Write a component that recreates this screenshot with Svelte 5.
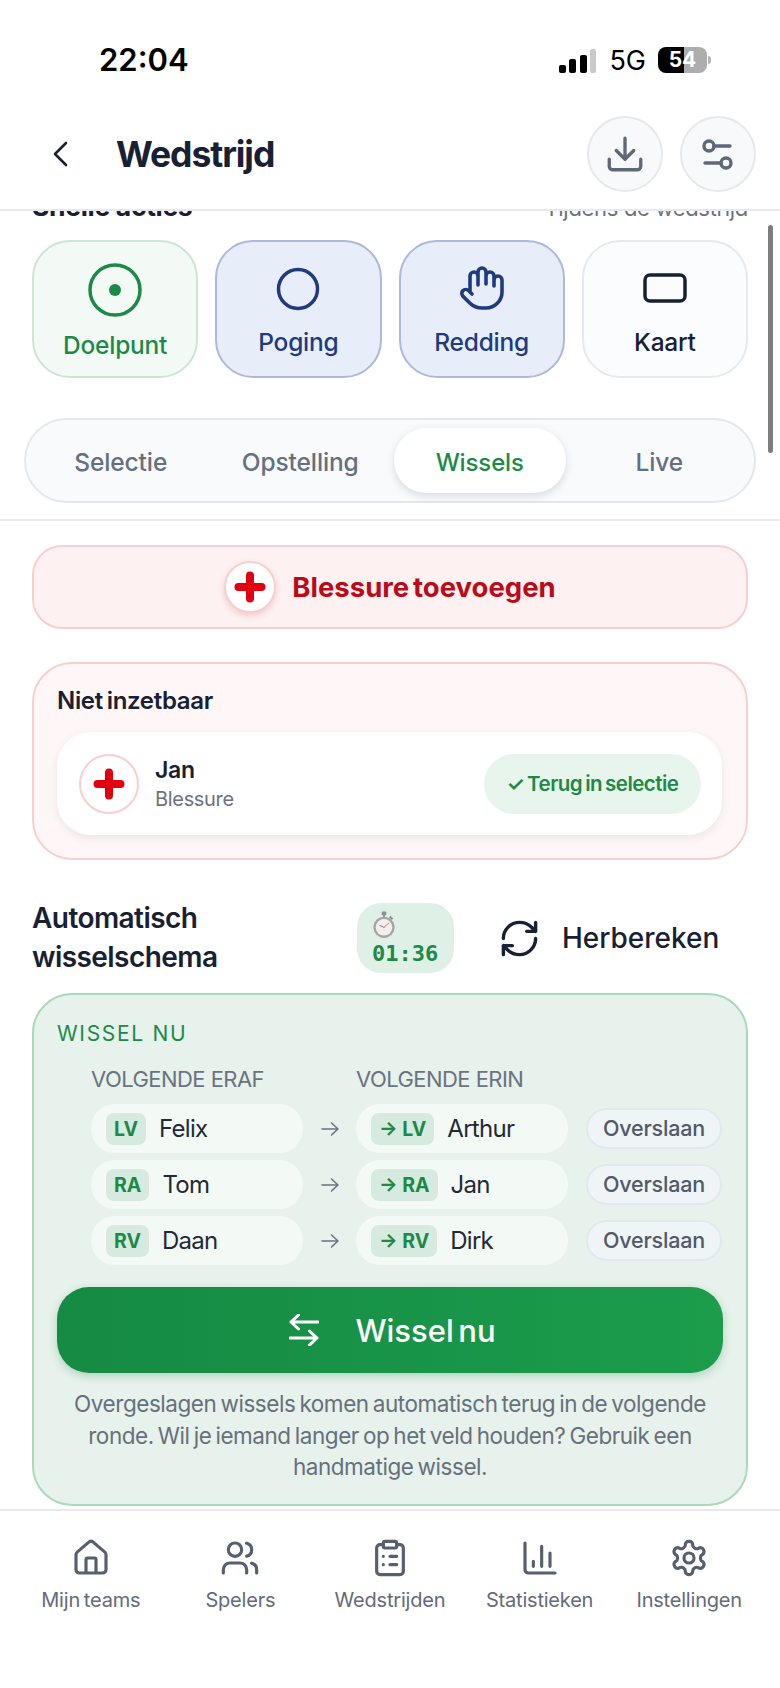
<script>
  const quick = [
    { label: 'Doelpunt', tone: 'green', icon: 'goal' },
    { label: 'Poging', tone: 'blue', icon: 'ring' },
    { label: 'Redding', tone: 'blue', icon: 'hand' },
    { label: 'Kaart', tone: 'plain', icon: 'card' }
  ];
  const tabs = ['Selectie', 'Opstelling', 'Wissels', 'Live'];
  const swaps = [
    { pos: 'LV', off: 'Felix', on: 'Arthur' },
    { pos: 'RA', off: 'Tom', on: 'Jan' },
    { pos: 'RV', off: 'Daan', on: 'Dirk' }
  ];
  const nav = [
    { label: 'Mijn teams', icon: 'home' },
    { label: 'Spelers', icon: 'users' },
    { label: 'Wedstrijden', icon: 'clip' },
    { label: 'Statistieken', icon: 'chart' },
    { label: 'Instellingen', icon: 'gear' }
  ];
</script>

{#snippet cross()}
  <svg class="cross" viewBox="0 0 32 32" aria-hidden="true">
    <path d="M16 4.5V27.500M4.500 16H27.500" />
  </svg>
{/snippet}

<div class="page">
  <div class="status">
    <span class="time">22:04</span>
    <div class="status-right">
      <div class="signal">
        <i class="b1"></i><i class="b2"></i><i class="b3"></i><i class="b4"></i>
      </div>
      <span class="net">5G</span>
      <div class="battery"><span>54</span></div>
      <i class="tip"></i>
    </div>
  </div>

  <header class="header">
    <svg class="back" viewBox="0 0 18 26" aria-hidden="true"><path d="M15 2 4 13l11 11" /></svg>
    <h1>Wedstrijd</h1>
    <div class="header-actions">
      <button class="round" aria-label="Download">
        <svg viewBox="0 0 24 24" width="42" height="42"><path d="M21 15v4a2 2 0 0 1-2 2H5a2 2 0 0 1-2-2v-4M7 10l5 5 5-5M12 15V3" /></svg>
      </button>
      <button class="round" aria-label="Filters">
        <svg viewBox="0 0 40 40" width="40" height="40"><circle cx="11" cy="12" r="5" /><path d="M16 12H32M7 29H23" /><circle cx="28" cy="29" r="5" /></svg>
      </button>
    </div>
  </header>

  <main class="main">
    <div class="scrollbar"></div>

    <div class="quick-head">
      <strong>Snelle acties</strong>
      <span>Tijdens de wedstrijd</span>
    </div>

    <div class="quick">
      {#each quick as q}
        <button class="qcard {q.tone}">
          {#if q.icon === 'goal'}
            <svg class="qi goal" viewBox="0 0 54 54"><circle cx="27" cy="27" r="25" /><circle class="dot" cx="27" cy="27" r="6" /></svg>
          {:else if q.icon === 'ring'}
            <svg class="qi" viewBox="0 0 44 44"><circle cx="22" cy="22" r="19.500" /></svg>
          {:else if q.icon === 'hand'}
            <svg class="qi hand" viewBox="0 0 24 24"><path d="M18 11V6a2 2 0 0 0-2-2 2 2 0 0 0-2 2M14 10V4a2 2 0 0 0-2-2 2 2 0 0 0-2 2v2M10 10.500V6a2 2 0 0 0-2-2 2 2 0 0 0-2 2v8M18 8a2 2 0 1 1 4 0v6a8 8 0 0 1-8 8h-2c-2.800 0-4.500-.860-5.990-2.340l-3.600-3.600a2 2 0 0 1 2.830-2.820L7 15" /></svg>
          {:else}
            <svg class="qi" viewBox="0 0 44 30"><rect x="2" y="2" width="40" height="26" rx="5" /></svg>
          {/if}
          <span>{q.label}</span>
        </button>
      {/each}
    </div>

    <div class="tabs">
      {#each tabs as t}
        <div class="tab" class:active={t === 'Wissels'}>{t}</div>
      {/each}
    </div>

    <div class="divider"></div>

    <div class="content">
      <button class="add-injury">
        <span class="add-circle">{@render cross()}</span>
        <span>Blessure toevoegen</span>
      </button>

      <section class="unavailable">
        <h2>Niet inzetbaar</h2>
        <div class="player">
          <span class="player-icon">{@render cross()}</span>
          <div class="player-text">
            <strong>Jan</strong>
            <span>Blessure</span>
          </div>
          <button class="return">✓ Terug in selectie</button>
        </div>
      </section>

      <div class="auto-head">
        <h2>Automatisch<br />wisselschema</h2>
        <div class="timer">
          <svg class="watch" viewBox="0 0 26 30" aria-hidden="true">
            <rect class="w-crown" x="10.500" y="0.500" width="5" height="4" rx="1" />
            <rect class="w-crown" x="12" y="3" width="2" height="4" />
            <path class="w-crown" d="M20 5l3 3-1.500 1.500-3-3z" />
            <circle class="w-rim" cx="13" cy="17.500" r="11.500" />
            <circle class="w-face" cx="13" cy="17.500" r="9" />
            <path class="w-hand" d="M13 17.500 18 13" />
            <path class="w-hand2" d="M13 17.500 8.500 15.500" />
          </svg>
          <span>01:36</span>
        </div>
        <button class="recalc">
          <svg viewBox="0 0 24 24" width="43" height="43"><path d="M3 12a9 9 0 0 1 9-9 9.750 9.750 0 0 1 6.740 2.740L21 8M21 3v5h-5M21 12a9 9 0 0 1-9 9 9.750 9.750 0 0 1-6.740-2.740L3 16M8 16H3v5" /></svg>
          <span>Herbereken</span>
        </button>
      </div>

      <section class="swap-card">
        <div class="eyebrow">WISSEL NU</div>
        <div class="swap-grid heads">
          <span>VOLGENDE ERAF</span>
          <span></span>
          <span>VOLGENDE ERIN</span>
        </div>
        <div class="rows">
          {#each swaps as s}
            <div class="swap-grid">
              <div class="pill">
                <b class="badge">{s.pos}</b>
                <span>{s.off}</span>
              </div>
              <svg class="arrow" viewBox="0 0 20 16" aria-hidden="true"><path d="M2 8H18M11.500 2 18 8l-6.500 6" /></svg>
              <div class="pill">
                <b class="badge">→ {s.pos}</b>
                <span>{s.on}</span>
              </div>
              <button class="skip">Overslaan</button>
            </div>
          {/each}
        </div>

        <button class="swap-now">
          <svg viewBox="0 0 30 32" width="30" height="32" aria-hidden="true"><path d="M29 8H2M9.500 1 2 8l7.500 7M1 24H28M20.500 17 28 24l-7.500 7" /></svg>
          <span>Wissel nu</span>
        </button>

        <p class="note">Overgeslagen wissels komen automatisch terug in de volgende ronde. Wil je iemand langer op het veld houden? Gebruik een handmatige wissel.</p>
      </section>
    </div>
  </main>

  <nav class="nav">
    {#each nav as n}
      <div class="nav-item">
        <svg viewBox="0 0 24 24" width="40" height="40" aria-hidden="true">
          {#if n.icon === 'home'}
            <path d="M3 10a2 2 0 0 1 .7-1.500l7-6a2 2 0 0 1 2.600 0l7 6a2 2 0 0 1 .7 1.500v9a2 2 0 0 1-2 2H5a2 2 0 0 1-2-2zM15 21v-8a1 1 0 0 0-1-1h-4a1 1 0 0 0-1 1v8" />
          {:else if n.icon === 'users'}
            <path d="M16 21v-2a4 4 0 0 0-4-4H6a4 4 0 0 0-4 4v2M22 21v-2a4 4 0 0 0-3-3.870M16 3.130a4 4 0 0 1 0 7.750" /><circle cx="9" cy="7" r="4" />
          {:else if n.icon === 'clip'}
            <rect x="8" y="2" width="8" height="4" rx="1" /><path d="M16 4h2a2 2 0 0 1 2 2v14a2 2 0 0 1-2 2H6a2 2 0 0 1-2-2V6a2 2 0 0 1 2-2h2M12 11h4M12 16h4M8 11h.01M8 16h.01" />
          {:else if n.icon === 'chart'}
            <path d="M3 3v16a2 2 0 0 0 2 2h16M18 17V9M13 17V5M8 17v-3" />
          {:else}
            <path d="M12.220 2h-.44a2 2 0 0 0-2 2v.18a2 2 0 0 1-1 1.730l-.43.25a2 2 0 0 1-2 0l-.15-.08a2 2 0 0 0-2.730.73l-.22.38a2 2 0 0 0 .73 2.730l.15.1a2 2 0 0 1 1 1.720v.51a2 2 0 0 1-1 1.740l-.15.09a2 2 0 0 0-.73 2.730l.22.38a2 2 0 0 0 2.730.73l.15-.08a2 2 0 0 1 2 0l.43.25a2 2 0 0 1 1 1.730V20a2 2 0 0 0 2 2h.44a2 2 0 0 0 2-2v-.18a2 2 0 0 1 1-1.730l.43-.25a2 2 0 0 1 2 0l.15.08a2 2 0 0 0 2.730-.73l.22-.39a2 2 0 0 0-.73-2.730l-.15-.08a2 2 0 0 1-1-1.740v-.5a2 2 0 0 1 1-1.740l.15-.09a2 2 0 0 0 .73-2.730l-.22-.38a2 2 0 0 0-2.730-.73l-.15.08a2 2 0 0 1-2 0l-.43-.25a2 2 0 0 1-1-1.730V4a2 2 0 0 0-2-2z" /><circle cx="12" cy="12" r="3" />
          {/if}
        </svg>
        <span>{n.label}</span>
      </div>
    {/each}
  </nav>
</div>

<style>
  :global(body) {
    margin: 0;
    background: #fff;
  }
  * {
    box-sizing: border-box;
  }
  button {
    font: inherit;
    margin: 0;
    padding: 0;
    border: 0;
    background: none;
    color: inherit;
  }
  h1, h2, p {
    margin: 0;
  }
  svg {
    display: block;
    flex: none;
    fill: none;
    stroke: currentColor;
    stroke-linecap: round;
    stroke-linejoin: round;
  }
  .page {
    width: 780px;
    height: 1688px;
    display: flex;
    flex-direction: column;
    overflow: hidden;
    background: #fff;
    color: #182033;
    font-family: Inter, "Noto Sans", sans-serif;
    letter-spacing: -0.02em;
  }

  /* status bar */
  .status {
    height: 105px;
    flex: none;
    display: flex;
    justify-content: space-between;
    padding: 40px 69px 0 99px;
    align-items: flex-start;
  }
  .time {
    font-size: 31px;
    line-height: 40px;
    font-weight: 600;
    color: #000;
    letter-spacing: 0;
  }
  .status-right {
    display: flex;
    align-items: center;
    height: 40px;
    color: #000;
  }
  .signal {
    display: flex;
    align-items: flex-end;
    gap: 3.500px;
    height: 24px;
    margin-top: 2px;
  }
  .signal i {
    display: block;
    width: 7px;
    border-radius: 2px;
    background: #000;
  }
  .b1 { height: 8px; }
  .b2 { height: 14px; }
  .b3 { height: 18px; }
  .signal .b4 { height: 24px; background: #c9c9c9; width: 6px; }
  .net {
    font-size: 27px;
    font-weight: 400;
    margin-left: 13px;
    letter-spacing: 0;
  }
  .battery {
    margin-left: 12px;
    width: 49px;
    height: 26px;
    border-radius: 8px;
    background: linear-gradient(90deg, #000 0 53%, #adadad 53%);
    color: #fff;
    font-size: 21px;
    font-weight: 700;
    line-height: 26px;
    text-align: center;
    letter-spacing: 0;
  }
  .tip {
    display: block;
    width: 3px;
    height: 8px;
    margin-left: 1px;
    border-radius: 0 3px 3px 0;
    background: #b5b5b5;
  }

  /* header */
  .header {
    height: 106px;
    flex: none;
    display: flex;
    align-items: center;
    padding: 0 24px 6px 51px;
    border-bottom: 2px solid #e8e9ee;
    position: relative;
    z-index: 2;
    background: #fff;
  }
  .back {
    width: 18px;
    height: 26px;
    stroke-width: 2.600;
    color: #182033;
  }
  h1 {
    font-size: 35.500px;
    font-weight: 700;
    margin-left: 47px;
    letter-spacing: -0.03em;
  }
  .header-actions {
    margin-left: auto;
    display: flex;
    gap: 17px;
  }
  .round {
    width: 76px;
    height: 76px;
    border-radius: 50%;
    background: #f8f9fb;
    border: 2px solid #e6e8ec;
    display: grid;
    place-items: center;
    color: #5f6778;
  }
  .round svg {
    stroke-width: 1.900;
  }
  .round:last-child svg {
    stroke-width: 3.400;
  }

  /* main */
  .main {
    flex: 1;
    min-height: 0;
    overflow: hidden;
    position: relative;
  }
  .scrollbar {
    position: absolute;
    right: 7px;
    top: 14px;
    width: 5px;
    height: 228px;
    border-radius: 3px;
    background: #7d7d7d;
  }
  .quick-head {
    display: flex;
    justify-content: space-between;
    align-items: baseline;
    padding: 0 32px;
    height: 30px;
    margin: -20px 0 19px;
    line-height: 30px;
  }
  .quick-head strong {
    font-size: 26.500px;
    font-weight: 700;
  }
  .quick-head span {
    font-size: 22px;
    color: #6b7280;
  }
  .quick {
    display: grid;
    grid-template-columns: repeat(4, 1fr);
    gap: 17px;
    padding: 0 32px;
  }
  .qcard {
    height: 138px;
    border-radius: 38px;
    border: 2px solid;
    display: flex;
    flex-direction: column;
    align-items: center;
    justify-content: flex-end;
    font-size: 24.500px;
    font-weight: 500;
    padding-bottom: 19px;
    gap: 16px;
    letter-spacing: -0.01em;
  }
  .qcard span {
    line-height: 30px;
  }
  .qi {
    stroke-width: 3.500;
    width: 44px;
    height: 44px;
  }
  .qi.hand {
    stroke-width: 1.800;
    width: 48px;
    height: 48px;
    margin: -3px 0 -1px;
  }
  .qi.goal {
    width: 54px;
    height: 54px;
    margin: -6px 0 -3px;
  }
  .dot {
    fill: currentColor;
    stroke: none;
  }
  .green {
    background: #f3faf6;
    border-color: #cbe6d5;
    color: #1b8a47;
    padding-bottom: 16px;
  }
  .blue {
    background: #e7edf9;
    border-color: #aeb9da;
    color: #1f3b7d;
  }
  .plain {
    background: #fbfcfe;
    border-color: #e7e9ef;
    color: #182033;
  }
  .plain .qi {
    width: 44px;
    height: 30px;
    margin: 6px 0 8px;
  }

  /* tabs */
  .tabs {
    margin: 40px 24px 0;
    height: 85px;
    border-radius: 43px;
    border: 2px solid #e4e7ec;
    background: #f8fafc;
    padding: 8px 9px;
    display: grid;
    grid-template-columns: repeat(4, 1fr);
    gap: 8px;
  }
  .tab {
    display: grid;
    place-items: center;
    padding-top: 3px;
    font-size: 24.500px;
    font-weight: 500;
    color: #64707f;
    border-radius: 34px;
    letter-spacing: -0.005em;
  }
  .tab.active {
    background: #fff;
    color: #1b8a47;
    font-size: 24px;
    box-shadow: 0 3px 8px rgba(30, 40, 60, 0.14);
  }
  .divider {
    height: 2px;
    margin-top: 16px;
    background: #e8e9ee;
  }

  .content {
    padding: 0 32px;
  }
  .add-injury {
    width: 100%;
    height: 84px;
    margin-top: 24px;
    border-radius: 30px;
    background: #fef1f1;
    border: 2px solid #f8cfd0;
    display: flex;
    align-items: center;
    justify-content: center;
    gap: 16px;
    color: #bb0a18;
    font-size: 27.500px;
    font-weight: 700;
    word-spacing: -0.1em;
  }
  .add-circle {
    width: 52px;
    height: 52px;
    border-radius: 50%;
    background: #fff;
    border: 2px solid #f8cfd0;
    box-shadow: 0 3px 6px rgba(180, 40, 40, 0.18);
    display: grid;
    place-items: center;
  }
  .cross {
    width: 32px;
    height: 32px;
    stroke: #e0000f;
    stroke-width: 8;
  }
  .unavailable {
    margin-top: 33px;
    height: 198px;
    border-radius: 40px;
    background: #fff7f7;
    border: 2px solid #f8cfd0;
    padding: 20px 24px 0 23px;
  }
  .unavailable h2 {
    font-size: 24px;
    line-height: 34px;
    font-weight: 600;
    word-spacing: -0.08em;
  }
  .player {
    margin-top: 14px;
    height: 103px;
    border-radius: 34px;
    background: #fff;
    box-shadow: 0 3px 10px rgba(30, 40, 60, 0.09);
    display: flex;
    align-items: center;
    padding: 0 21px 0 22px;
  }
  .player-icon {
    width: 60px;
    height: 60px;
    border-radius: 50%;
    border: 2px solid #f8cfd0;
    display: grid;
    place-items: center;
    background: #fff;
  }
  .player-text {
    margin-left: 16px;
    display: flex;
    flex-direction: column;
  }
  .player-text strong {
    font-size: 23px;
    line-height: 30px;
    font-weight: 600;
  }
  .player-text span {
    font-size: 20px;
    line-height: 28px;
    color: #6b7280;
  }
  .return {
    margin-left: auto;
    width: 217px;
    height: 60px;
    border-radius: 30px;
    background: #e8f5ec;
    color: #1b8a47;
    font-size: 20.500px;
    font-weight: 600;
    word-spacing: -0.08em;
    letter-spacing: -0.025em;
  }

  /* auto head */
  .auto-head {
    margin-top: 38px;
    height: 80px;
    display: flex;
    align-items: center;
  }
  .auto-head h2 {
    flex: 0 0 325px;
    font-size: 28px;
    line-height: 39px;
    font-weight: 600;
    letter-spacing: -0.02em;
  }
  .timer {
    width: 97px;
    height: 70px;
    border-radius: 24px;
    background: #dff0e6;
    padding: 8px 0 0 15px;
  }
  .timer span {
    display: block;
    margin-top: 1px;
    font-family: "DejaVu Sans Mono", "Liberation Mono", monospace;
    font-size: 22px;
    line-height: 26px;
    font-weight: 700;
    color: #1b8a47;
    letter-spacing: 0;
  }
  .watch {
    width: 24px;
    height: 28px;
    margin-bottom: 2px;
    stroke: none;
  }
  .w-crown { fill: #8f8f8f; }
  .w-rim { fill: #a5a5a5; }
  .w-face { fill: #f2f0ee; }
  .w-hand { stroke: #c96a5c; stroke-width: 1; fill: none; }
  .w-hand2 { stroke: #777; stroke-width: 1; fill: none; }
  .recalc {
    margin-left: 44px;
    display: flex;
    align-items: center;
    gap: 21px;
    font-size: 28px;
    font-weight: 500;
    color: #182033;
  }
  .recalc svg {
    stroke-width: 1.900;
  }

  /* swap card */
  .swap-card {
    margin-top: 15px;
    height: 513px;
    border-radius: 40px;
    background: #e6f2eb;
    border: 2px solid #abd7bb;
    padding: 26px 23px 0;
  }
  .eyebrow {
    font-size: 21px;
    line-height: 26px;
    color: #1b8a47;
    letter-spacing: 0.08em;
  }
  .swap-grid {
    display: grid;
    grid-template-columns: 212px 53px 212px 153px;
    padding-left: 34px;
    align-items: center;
  }
  .heads {
    margin-top: 19px;
    font-size: 22px;
    line-height: 26px;
    color: #6b7280;
    letter-spacing: -0.025em;
    margin-bottom: 12px;
  }
  .rows {
    display: flex;
    flex-direction: column;
    gap: 7px;
  }
  .pill {
    height: 49px;
    border-radius: 24px;
    background: #f3f9f5;
    display: flex;
    align-items: center;
    padding-left: 15px;
    font-size: 24px;
    color: #1f2937;
    gap: 13px;
    letter-spacing: -0.03em;
  }
  .badge {
    height: 32px;
    padding: 0 8px;
    border-radius: 8px;
    background: #d7eadf;
    color: #1b8a47;
    font-size: 19.500px;
    line-height: 32px;
    font-weight: 700;
    letter-spacing: 0;
  }
  .arrow {
    width: 20px;
    height: 16px;
    margin-left: 17px;
    color: #6b7280;
    stroke-width: 1.600;
  }
  .skip {
    justify-self: end;
    width: 136px;
    height: 41px;
    margin-right: -1px;
    border-radius: 21px;
    background: #eff4f6;
    border: 2px solid #e2e8ee;
    color: #4f5a68;
    font-size: 21.500px;
    font-weight: 500;
    letter-spacing: -0.01em;
    padding-bottom: 2px;
  }
  .swap-now {
    width: 100%;
    height: 86px;
    margin-top: 22px;
    border-radius: 32px;
    background: linear-gradient(90deg, #158a43, #1b9d4c);
    box-shadow: 0 3px 8px rgba(20, 110, 60, 0.25);
    color: #fff;
    display: flex;
    align-items: center;
    justify-content: center;
    gap: 36px;
    font-size: 31px;
    font-weight: 500;
    word-spacing: -0.12em;
    padding-left: 5px;
  }
  .swap-now svg {
    stroke-width: 3;
  }
  .note {
    margin-top: 15px;
    font-size: 22.500px;
    line-height: 31.500px;
    color: #66707c;
    text-align: center;
    letter-spacing: -0.02em;
    word-spacing: -0.08em;
  }

  /* nav */
  .nav {
    flex: none;
    height: 179px;
    border-top: 2px solid #e8e9ee;
    padding: 27px 16px 0;
    display: grid;
    grid-template-columns: repeat(5, 1fr);
    align-items: start;
  }
  .nav-item {
    display: flex;
    flex-direction: column;
    align-items: center;
    color: #565f70;
  }
  .nav-item svg {
    stroke-width: 1.900;
  }
  .nav-item span {
    margin-top: 8px;
    font-size: 20px;
    line-height: 28px;
    color: #636b7a;
    white-space: nowrap;
    letter-spacing: -0.01em;
    word-spacing: -0.08em;
  }
</style>
